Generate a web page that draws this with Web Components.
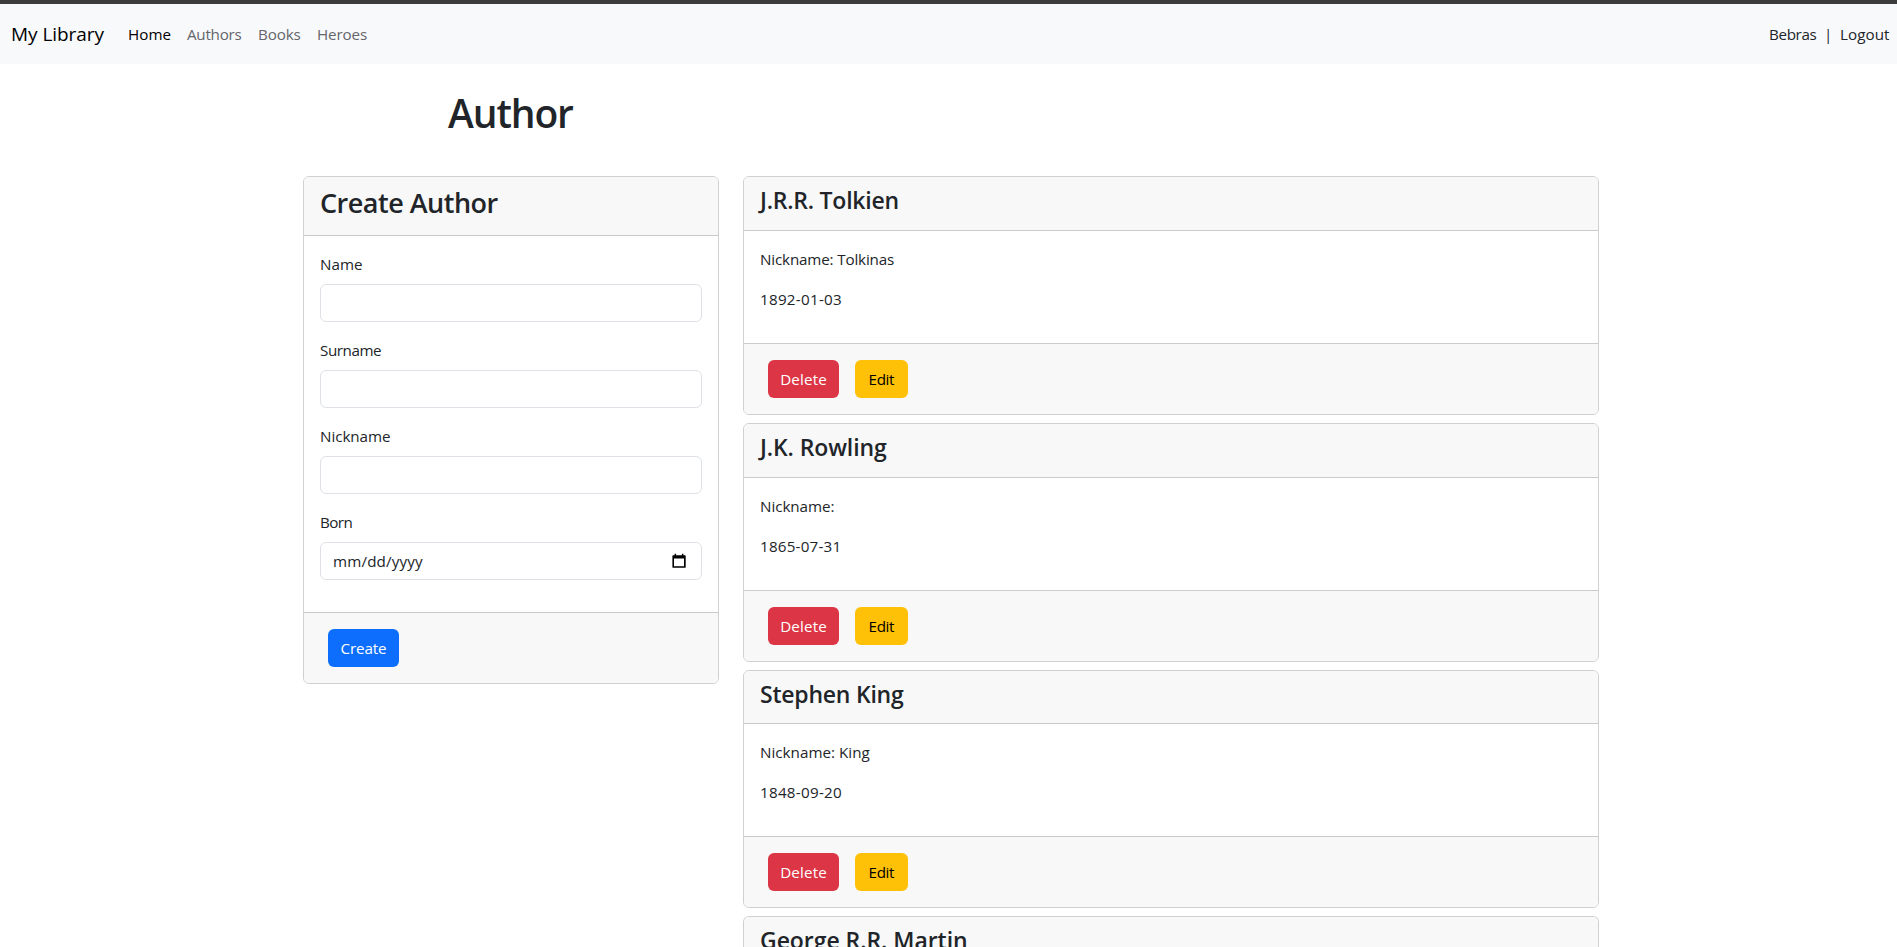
<!DOCTYPE html>
<html lang="en">
<head>
<meta charset="utf-8">
<title>My Library</title>
<style>
html,body{margin:0;padding:0;background:#fff}
body{font-family:"Open Sans","Noto Sans",sans-serif;font-size:15.2px;line-height:24px;color:#212529}
</style>
</head>
<body>
<library-page></library-page>
<script>
const define = (name, html, setup) => {
  const tpl = document.createElement('template');
  tpl.innerHTML = html;
  customElements.define(name, class extends HTMLElement {
    connectedCallback() {
      if (this.shadowRoot) return;
      this.attachShadow({mode: 'open'}).append(tpl.content.cloneNode(true));
      if (setup) setup(this, this.shadowRoot);
    }
  });
};

/* A single line of text whose tracking is set so that its ink spans `w` pixels. */
const ctx = document.createElement('canvas').getContext('2d');
define('fit-text', `<style>:host{display:inline-block;white-space:pre}</style><slot></slot>`, el => {
  const text = el.textContent, cs = getComputedStyle(el), w = +el.getAttribute('w');
  if (!w || text.length < 2) return;
  ctx.font = `${cs.fontWeight} ${cs.fontSize} ${cs.fontFamily}`;
  const m = ctx.measureText(text);
  const ls = (w - m.actualBoundingBoxLeft - m.actualBoundingBoxRight) / (text.length - 1);
  el.style.letterSpacing = ls.toFixed(3) + 'px';
  el.style.marginRight = (-ls).toFixed(3) + 'px';
});

define('nav-bar', `<style>
:host{display:flex;align-items:center;box-sizing:border-box;height:64px;border-top:4px solid #3c3c3c;background:#f8f9fb;padding:0 6px 0 11px}
.brand{font-size:19px;color:#000;width:117px;line-height:30px}
nav{display:flex;flex:1;color:#65666a}
.home{color:#000}
.user{display:flex}
</style>
<div class="brand"><fit-text w="92.5">My Library</fit-text></div>
<nav><div class="home" style="width:59px"><fit-text w="41.5">Home</fit-text></div><div style="width:71px"><fit-text w="54.5">Authors</fit-text></div><div style="width:59px"><fit-text w="41.5">Books</fit-text></div><div><fit-text w="49">Heroes</fit-text></div></nav>
<div class="user"><div style="width:55px"><fit-text w="46.5">Bebras</fit-text></div><div style="width:16px">|</div><div style="width:51px"><fit-text w="49">Logout</fit-text></div></div>`);

define('ui-card', `<style>
:host{display:flex;flex-direction:column;box-sizing:border-box;border:1px solid #d0d0d0;border-radius:6px;background:#fff;overflow:hidden}
header{padding:9px 16px 15px;background:#f8f8f8;border-bottom:1px solid #cbcbcb;font-weight:600}
main{padding:16px}
footer{display:flex;gap:16px;padding:16px 24px;background:#f8f8f8;border-top:1px solid #cbcbcb}
:host([heading-only]){border-bottom:0;border-radius:6px 6px 0 0}
:host([heading-only]) header{padding-bottom:0;border:0}
:host([heading-only]) main,:host([heading-only]) footer{display:none}
</style>
<header><slot name="title"></slot></header><main><slot></slot></main><footer><slot name="actions"></slot></footer>`);

define('ui-button', `<style>
:host{display:block}
button{display:block;box-sizing:border-box;width:71px;height:38px;border:0;border-radius:6px;padding:0;font:inherit;line-height:24px;text-align:center;color:#fff;background:#0d6efd}
:host([kind=danger]) button{background:#dc3545}
:host([kind=warning]) button{background:#ffc107;color:#000;width:53px}
</style><button><slot></slot></button>`);

define('form-field', `<style>
:host{display:block;margin-bottom:16px}
label{display:block;margin-bottom:8px;height:24px;line-height:24px}
input,.date{display:flex;align-items:center;justify-content:space-between;box-sizing:border-box;width:100%;height:38px;border:1px solid #dee2e6;border-radius:6px;padding:0 12px;background:#fff}
.date{padding-right:15px;line-height:26px}
[hidden]{display:none}
</style><label><slot></slot></label><input type="text"><div class="date" hidden><fit-text w="89">mm/dd/yyyy</fit-text>
<svg width="14" height="16" viewBox="0 0 14 16"><path d="M1 2.2h1.6V.8h1.5v1.4h5.8V.8h1.5v1.4H13a.7.7 0 0 1 .7.7v11a.9.9 0 0 1-.9.9H1.3a.9.9 0 0 1-.9-.9v-11A.7.7 0 0 1 1 2.2zM2 5.4v7.8h10V5.4z" fill="#000" fill-rule="evenodd"/></svg></div>`, (el, root) => {
  if (el.getAttribute('type') === 'date') {
    root.querySelector('input').hidden = true;
    root.querySelector('.date').hidden = false;
  }
});

define('author-card', `<style>
:host{display:block;margin-bottom:8px}
:host(:last-child){margin:0}
h3{margin:0;font-size:23px;line-height:28.8px;font-weight:600}
p{margin:0 0 16px;line-height:24px}
</style><ui-card><h3 slot="title"></h3><p class="nick"></p><p class="born"></p>
<ui-button slot="actions" kind="danger"><fit-text w="45">Delete</fit-text></ui-button><ui-button slot="actions" kind="warning"><fit-text w="25.5">Edit</fit-text></ui-button></ui-card>`, (el, root) => {
  const put = (sel, text, w) => {
    const t = document.createElement('fit-text');
    t.textContent = text;
    t.setAttribute('w', w);
    root.querySelector(sel).append(t);
  };
  const d = el.dataset;
  put('h3', d.name, d.nameW);
  if (!d.born) {
    root.querySelector('ui-card').setAttribute('heading-only', '');
    root.querySelectorAll('p, ui-button').forEach(n => n.remove());
    return;
  }
  put('.nick', ('Nickname: ' + d.nick).trim(), d.nickW);
  put('.born', d.born, d.bornW);
});

define('library-page', `<style>
:host{display:block;height:947px;overflow:hidden}
.grid{display:grid;grid-template-columns:416px 856px;column-gap:24px;margin-left:303px;align-items:start}
h1{margin:25px 0 39px;font-size:39px;line-height:48px;font-weight:600;text-align:center}
h2{margin:0;font-size:27px;line-height:33.6px;font-weight:600}
</style>
<nav-bar></nav-bar>
<div class="grid"><h1><fit-text w="126">Author</fit-text></h1></div>
<div class="grid">
<ui-card><h2 slot="title"><fit-text w="177.5">Create Author</fit-text></h2>
<form-field><fit-text w="41">Name</fit-text></form-field>
<form-field><fit-text w="61">Surname</fit-text></form-field>
<form-field><fit-text w="69">Nickname</fit-text></form-field>
<form-field type="date"><fit-text w="31.5">Born</fit-text></form-field>
<ui-button slot="actions"><fit-text w="45.5">Create</fit-text></ui-button></ui-card>
<section>
<author-card data-name="J.R.R. Tolkien" data-name-w="139.5" data-nick="Tolkinas" data-nick-w="133" data-born="1892-01-03" data-born-w="80"></author-card>
<author-card data-name="J.K. Rowling" data-name-w="129" data-nick="" data-nick-w="72.5" data-born="1865-07-31" data-born-w="77.5"></author-card>
<author-card data-name="Stephen King" data-name-w="143" data-nick="King" data-nick-w="108.5" data-born="1848-09-20" data-born-w="80"></author-card>
<author-card data-name="George R.R. Martin" data-name-w="205"></author-card>
</section></div>`);
</script>
</body>
</html>
